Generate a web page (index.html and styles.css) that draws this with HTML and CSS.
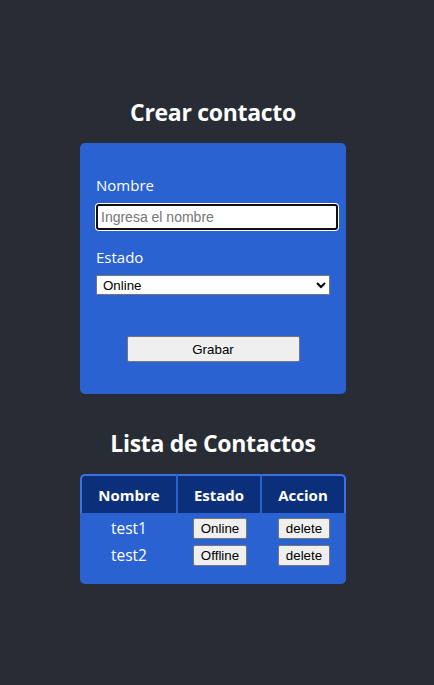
FILE: index.html
```html
<!DOCTYPE html>
<html lang="es">
<head>
<meta charset="utf-8">
<link rel="stylesheet" href="styles.css">
</head>
<body>
<div class="app">
  <h1 class="title title-first">Crear contacto</h1>
  <form class="card form-card">
    <label class="label" for="nombre">Nombre</label>
    <input id="nombre" class="input focused" type="text" placeholder="Ingresa el nombre">
    <label class="label label-estado" for="estado">Estado</label>
    <select id="estado" class="select">
      <option>Online</option>
      <option>Offline</option>
    </select>
    <div class="actions">
      <button type="button" class="btn btn-save">Grabar</button>
    </div>
  </form>

  <h1 class="title">Lista de Contactos</h1>
  <div class="card table-card">
    <table class="table">
      <thead>
        <tr><th class="col-name">Nombre</th><th class="col-state">Estado</th><th class="col-action">Accion</th></tr>
      </thead>
      <tbody>
        <tr><td>test1</td><td><button class="btn btn-sm">Online</button></td><td><button class="btn btn-sm">delete</button></td></tr>
        <tr><td>test2</td><td><button class="btn btn-sm">Offline</button></td><td><button class="btn btn-sm">delete</button></td></tr>
      </tbody>
    </table>
  </div>
</div>
</body>
</html>
```
FILE: styles.css
```css
html, body {
  margin: 0;
  padding: 0;
}
body {
  background: #282c34;
  min-height: 685px;
  font-family: "Open Sans", "Noto Sans", sans-serif;
  color: #ffffff;
}
.app {
  width: 266px;
  margin: 0 auto;
  padding: 96px 8px 0 0;
  display: flex;
  flex-direction: column;
}
.title {
  margin: 0;
  font-size: 23px;
  font-weight: 700;
  text-align: center;
  line-height: 32px;
  letter-spacing: -0.3px;
}
.card {
  background: #2a62d1;
  border-radius: 5px;
}
.form-card {
  margin: 15px 0 33px;
  padding: 32px 16px 32px;
  display: flex;
  flex-direction: column;
}
.label {
  font-size: 15px;
  line-height: 20px;
  margin-bottom: 9px;
}
.label-estado {
  margin-top: 17px;
  margin-bottom: 8px;
}
.input {
  box-sizing: border-box;
  width: 242px;
  height: 26px;
  padding: 1px 3px;
  border: 2px solid #101010;
  border-radius: 3px;
  box-shadow: 0 0 0 1px #ffffff;
  font-family: Arial, "Liberation Sans", sans-serif;
  font-size: 14px;
  color: #000;
  background: #fff;
  margin: 0;
  outline: none;
}
.input::placeholder {
  color: #767676;
}
.select {
  box-sizing: border-box;
  width: 234px;
  height: 20px;
  margin: 0;
  padding: 0 2px;
  border: 1px solid #767676;
  border-radius: 0;
  font-family: Arial, "Liberation Sans", sans-serif;
  font-size: 13.33px;
  color: #000;
  background: #fff;
}
.actions {
  display: flex;
  justify-content: center;
  margin-top: 41px;
}
.btn {
  font-family: Arial, "Liberation Sans", sans-serif;
  font-size: 13.33px;
  color: #000;
  background: #efefef;
  border: 1px solid #767676;
  border-radius: 2px;
}
.btn-save {
  box-sizing: border-box;
  width: 173px;
  height: 26px;
  padding: 0 6px;
}
.table-card {
  margin-top: 15px;
  padding: 0 0 15px;
  overflow: hidden;
}
.table {
  width: 266px;
  border: none;
  border-spacing: 0;
  border-collapse: separate;
}
.table th {
  background: #0c2f7b;
  font-size: 15px;
  font-weight: 700;
  height: 37px;
  padding: 0;
  border-top: 2px solid #3a72e4;
  border-right: 2px solid #2a62d1;
}
.table .col-name { width: 94px; border-left: 2px solid #3a72e4; }
.table .col-state { width: 82px; }
.table .col-action { width: 82px; border-right: 2px solid #3a72e4; }
.table th:first-child { border-top-left-radius: 5px; }
.table th:last-child { border-top-right-radius: 5px; }
.table td {
  text-align: center;
  font-size: 15.5px;
  padding: 3px 0 3px;
  height: 21px;
  line-height: 21px;
}
.table tbody tr:first-child td {
  padding-top: 5px;
}
.btn-sm {
  box-sizing: border-box;
  height: 21px;
  padding: 0 7px;
  line-height: 15px;
  vertical-align: top;
}
```
